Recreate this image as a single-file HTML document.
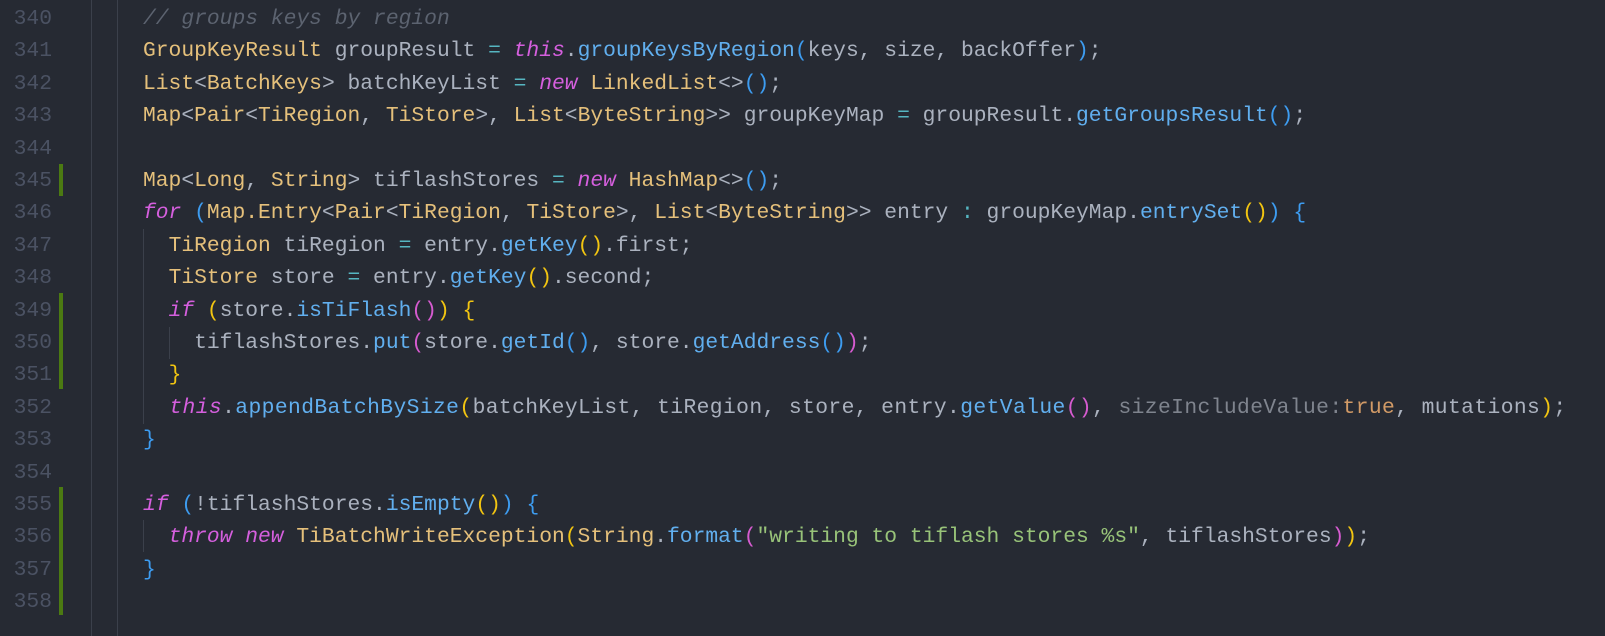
<!DOCTYPE html>
<html><head><meta charset="utf-8"><style>
body{margin:0;width:1605px;height:636px;background:#262a33;overflow:hidden;position:relative;font-family:"Liberation Mono",monospace;font-size:21.3px;}
.ln{position:absolute;left:0;width:52px;text-align:right;color:#4b5263;height:32.4px;line-height:32.4px;margin-top:2px}
.c{position:absolute;left:143px;white-space:pre;color:#abb2bf;height:32.4px;line-height:32.4px;margin-top:2px}
.g{position:absolute;width:1px;background:#3b404b;}
.bar{position:absolute;left:59px;width:4px;background:#4b7a12;}
.t{color:#e5c07b}.k{color:#d55fde;font-style:italic}.m{color:#61afef}.o{color:#56b6c2}
.cm{color:#5c6370;font-style:italic}.s{color:#98c379}.n{color:#d19a66}.h{color:#7f848e}
.B{color:#3d9cf0}.Y{color:#f2c511}.P{color:#d65bd0}
</style></head><body>
<div class="g" style="left:91px;top:0;height:636px"></div>
<div class="g" style="left:117px;top:0;height:636px"></div>
<div class="g" style="left:143px;top:229px;height:195px"></div>
<div class="g" style="left:169px;top:327px;height:32px"></div>
<div class="g" style="left:143px;top:520px;height:32px"></div>
<div class="bar" style="top:164px;height:32px"></div>
<div class="bar" style="top:293px;height:96px"></div>
<div class="bar" style="top:487px;height:128px"></div>

<div class="ln" style="top:1px">340</div><div class="c" style="top:1px"><span class="cm">// groups keys by region</span></div>
<div class="ln" style="top:33.4px">341</div><div class="c" style="top:33.4px"><span class="t">GroupKeyResult</span> groupResult <span class="o">=</span> <span class="k">this</span>.<span class="m">groupKeysByRegion</span><span class="B">(</span>keys, size, backOffer<span class="B">)</span>;</div>
<div class="ln" style="top:65.8px">342</div><div class="c" style="top:65.8px"><span class="t">List</span>&lt;<span class="t">BatchKeys</span>&gt; batchKeyList <span class="o">=</span> <span class="k">new</span> <span class="t">LinkedList</span>&lt;&gt;<span class="B">()</span>;</div>
<div class="ln" style="top:98.2px">343</div><div class="c" style="top:98.2px"><span class="t">Map</span>&lt;<span class="t">Pair</span>&lt;<span class="t">TiRegion</span>, <span class="t">TiStore</span>&gt;, <span class="t">List</span>&lt;<span class="t">ByteString</span>&gt;&gt; groupKeyMap <span class="o">=</span> groupResult.<span class="m">getGroupsResult</span><span class="B">()</span>;</div>
<div class="ln" style="top:130.6px">344</div>
<div class="ln" style="top:163px">345</div><div class="c" style="top:163px"><span class="t">Map</span>&lt;<span class="t">Long</span>, <span class="t">String</span>&gt; tiflashStores <span class="o">=</span> <span class="k">new</span> <span class="t">HashMap</span>&lt;&gt;<span class="B">()</span>;</div>
<div class="ln" style="top:195.4px">346</div><div class="c" style="top:195.4px"><span class="k">for</span> <span class="B">(</span><span class="t">Map.Entry</span>&lt;<span class="t">Pair</span>&lt;<span class="t">TiRegion</span>, <span class="t">TiStore</span>&gt;, <span class="t">List</span>&lt;<span class="t">ByteString</span>&gt;&gt; entry <span class="o">:</span> groupKeyMap.<span class="m">entrySet</span><span class="Y">()</span><span class="B">)</span> <span class="B">{</span></div>
<div class="ln" style="top:227.8px">347</div><div class="c" style="top:227.8px">  <span class="t">TiRegion</span> tiRegion <span class="o">=</span> entry.<span class="m">getKey</span><span class="Y">()</span>.first;</div>
<div class="ln" style="top:260.2px">348</div><div class="c" style="top:260.2px">  <span class="t">TiStore</span> store <span class="o">=</span> entry.<span class="m">getKey</span><span class="Y">()</span>.second;</div>
<div class="ln" style="top:292.6px">349</div><div class="c" style="top:292.6px">  <span class="k">if</span> <span class="Y">(</span>store.<span class="m">isTiFlash</span><span class="P">()</span><span class="Y">)</span> <span class="Y">{</span></div>
<div class="ln" style="top:325px">350</div><div class="c" style="top:325px">    tiflashStores.<span class="m">put</span><span class="P">(</span>store.<span class="m">getId</span><span class="B">()</span>, store.<span class="m">getAddress</span><span class="B">()</span><span class="P">)</span>;</div>
<div class="ln" style="top:357.4px">351</div><div class="c" style="top:357.4px">  <span class="Y">}</span></div>
<div class="ln" style="top:389.8px">352</div><div class="c" style="top:389.8px;letter-spacing:0.4px">  <span class="k">this</span>.<span class="m">appendBatchBySize</span><span class="Y">(</span>batchKeyList, tiRegion, store, entry.<span class="m">getValue</span><span class="P">()</span>, <span class="h">sizeIncludeValue:</span><span class="n">true</span>, mutations<span class="Y">)</span>;</div>
<div class="ln" style="top:422.2px">353</div><div class="c" style="top:422.2px"><span class="B">}</span></div>
<div class="ln" style="top:454.6px">354</div>
<div class="ln" style="top:487px">355</div><div class="c" style="top:487px"><span class="k">if</span> <span class="B">(</span>!tiflashStores.<span class="m">isEmpty</span><span class="Y">()</span><span class="B">)</span> <span class="B">{</span></div>
<div class="ln" style="top:519.4px">356</div><div class="c" style="top:519.4px">  <span class="k">throw</span> <span class="k">new</span> <span class="t">TiBatchWriteException</span><span class="Y">(</span><span class="t">String</span>.<span class="m">format</span><span class="P">(</span><span class="s">"writing to tiflash stores %s"</span>, tiflashStores<span class="P">)</span><span class="Y">)</span>;</div>
<div class="ln" style="top:551.8px">357</div><div class="c" style="top:551.8px"><span class="B">}</span></div>
<div class="ln" style="top:584.2px">358</div>
</body></html>
